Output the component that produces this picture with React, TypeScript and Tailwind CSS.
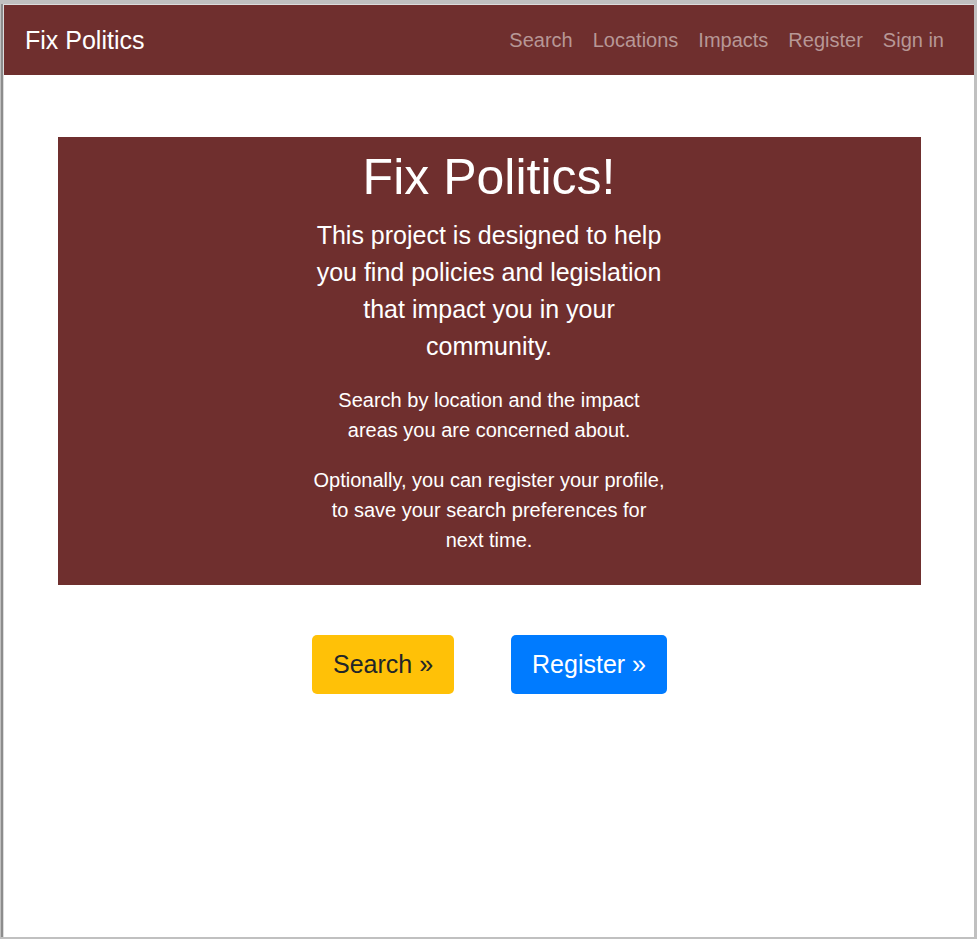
import React from "react";

export default function App() {
  const links = ["Search", "Locations", "Impacts", "Register", "Sign in"];
  return (
    <div
      className="w-[977px] h-[939px] bg-[#c0c0c0] pt-[4px] pl-[1px] pr-[3px] pb-[2px] overflow-hidden"
      style={{ fontFamily: '"Liberation Sans", Arial, sans-serif' }}
    >
      <div className="h-full border-l-2 border-[#8c8c8c]">
        <div className="h-full border-l border-t border-[#dcdcdc] bg-white flex flex-col">
          <nav className="h-[70px] bg-[#6f2f2e] flex items-center justify-between pl-[21px] pr-[20px] shrink-0">
            <span className="text-[25px] text-white leading-[37px]">Fix Politics</span>
            <ul className="flex items-center">
              {links.map((l) => (
                <li key={l} className="px-[10px] text-[20px] leading-[30px] text-[#b79796]">
                  {l}
                </li>
              ))}
            </ul>
          </nav>

          <main className="flex flex-col items-center">
            <section className="mt-[62px] w-[863px] bg-[#6f2f2e] py-[10px] flex flex-col items-center text-white text-center">
              <h1 className="text-[50px] leading-[60px] font-normal mb-[10px]">Fix Politics!</h1>
              <div className="w-[354px]">
                <p className="text-[25px] leading-[37px] mb-[20px]">
                  This project is designed to help you find policies and legislation that impact you in your
                  community.
                </p>
                <p className="text-[20px] leading-[30px] mb-[20px]">
                  Search by location and the impact areas you are concerned about.
                </p>
                <p className="text-[20px] leading-[30px] mb-[20px]">
                  Optionally, you can register your profile, to save your search preferences for next time.
                </p>
              </div>
            </section>

            <div className="mt-[50px] ml-[1px] flex justify-center gap-[57px]">
              <button className="h-[59px] w-[142px] rounded-[5px] bg-[#ffc107] text-[#212529] text-[25px] leading-[37px]">
                Search »
              </button>
              <button className="h-[59px] w-[156px] rounded-[5px] bg-[#007bff] text-white text-[25px] leading-[37px]">
                Register »
              </button>
            </div>
          </main>
        </div>
      </div>
    </div>
  );
}
